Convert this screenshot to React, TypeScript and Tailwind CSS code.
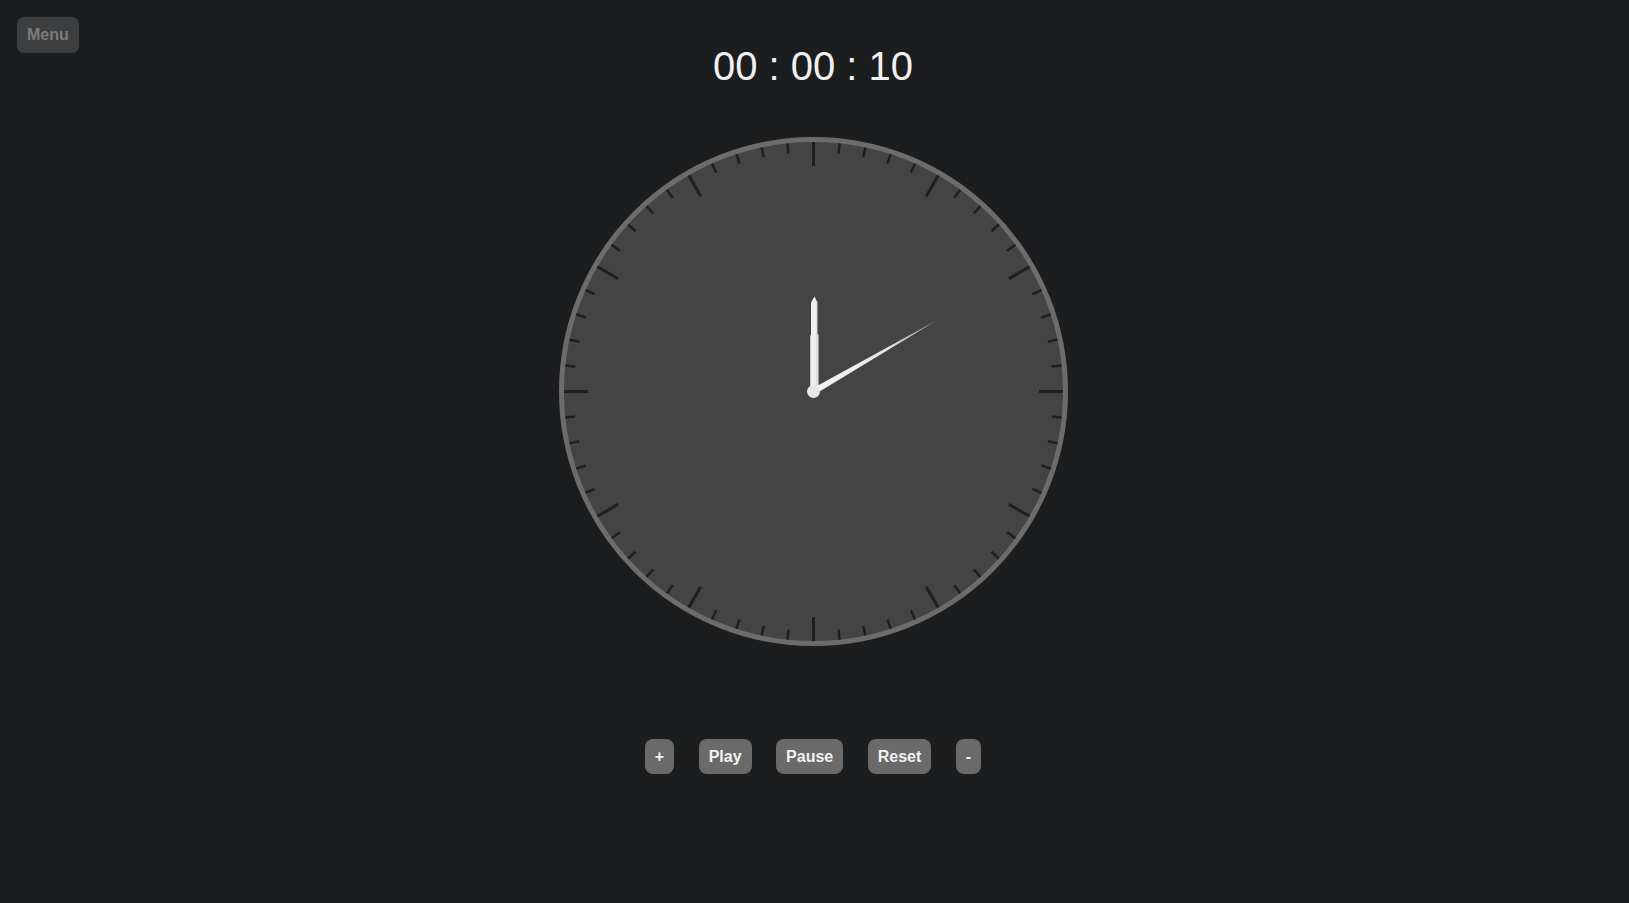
import React from "react";

const SIZE = 509;
const C = 254.5;

function ClockFace() {
  const ticks = Array.from({ length: 60 }, (_, i) => {
    const a = (i * 6 * Math.PI) / 180;
    const hour = i % 5 === 0;
    const r1 = 249.5;
    const r2 = hour ? 225.5 : 239.5;
    const sx = Math.sin(a);
    const cy = -Math.cos(a);
    return (
      <line
        key={i}
        x1={C + sx * r1}
        y1={C + cy * r1}
        x2={C + sx * r2}
        y2={C + cy * r2}
        stroke="#1f1f20"
        strokeWidth={hour ? 3 : 2.5}
      />
    );
  });

  const sa = (60 * Math.PI) / 180;
  const dx = Math.sin(sa);
  const dy = -Math.cos(sa);
  const px = Math.cos(sa);
  const py = Math.sin(sa);
  const len = 143;
  const tipX = C + dx * len;
  const tipY = C + dy * len;
  const hw = 3.2;
  const secPts = `${C + px * hw},${C + py * hw} ${C - px * hw},${C - py * hw} ${tipX},${tipY}`;

  return (
    <svg width={SIZE} height={SIZE} viewBox={`0 0 ${SIZE} ${SIZE}`} className="block">
      <defs>
        <linearGradient id="secg" gradientUnits="userSpaceOnUse" x1={C} y1={C} x2={tipX} y2={tipY}>
          <stop offset="0" stopColor="#f4f4f4" />
          <stop offset="0.6" stopColor="#e6e6e6" />
          <stop offset="1" stopColor="#a8a8a8" />
        </linearGradient>
        <linearGradient id="hg" x1="0" y1="0" x2="1" y2="0">
          <stop offset="0" stopColor="#bdbdbd" />
          <stop offset="0.35" stopColor="#ececec" />
          <stop offset="1" stopColor="#f2f2f2" />
        </linearGradient>
        <linearGradient id="mg" x1="0" y1="0" x2="1" y2="0">
          <stop offset="0" stopColor="#f0f0f0" />
          <stop offset="0.7" stopColor="#ededed" />
          <stop offset="1" stopColor="#d0d0d0" />
        </linearGradient>
      </defs>
      <circle cx={C} cy={C} r={252} fill="#444444" stroke="#6c6c6c" strokeWidth={5} />
      {ticks}
      {/* hour hand */}
      <polygon
        points={`${C - 3.5},${C} ${C - 3.5},${C - 56} ${C},${C - 59} ${C + 5},${C - 57} ${C + 5},${C}`}
        fill="url(#hg)"
      />
      {/* minute hand */}
      <polygon
        points={`${C - 2.5},${C} ${C - 2.5},${C - 89} ${C + 1},${C - 95} ${C + 4},${C - 89} ${C + 4},${C}`}
        fill="url(#mg)"
      />
      {/* second hand */}
      <polygon points={secPts} fill="url(#secg)" />
      <circle cx={C} cy={C} r={6.5} fill="#e8e8e8" />
    </svg>
  );
}

export default function App() {
  const font = { fontFamily: '"Liberation Sans", Arial, sans-serif' };
  const btn =
    "h-[35px] flex items-center px-[10px] rounded-[8px] bg-[#6a6a6a] text-[#f2f2f2] text-[16px] font-bold leading-none";
  return (
    <div
      className="min-h-[903px] w-full bg-[#1c1d1f] grid grid-cols-[1fr_auto_1fr] pr-[3px]"
      style={font}
    >
      <div className="pt-[17px] pl-[17px]">
        <button className="h-[36px] px-[10px] rounded-[7px] bg-[#3d3e40] text-[#7b7b7b] text-[16px] font-bold leading-none">
          Menu
        </button>
      </div>
      <div className="flex flex-col items-center pt-[46px]">
        <div className="text-[40px] leading-[40px] text-[#f0f0f0] whitespace-pre">00 : 00 : 10</div>
        <div className="mt-[51px]">
          <ClockFace />
        </div>
        <div className="mt-[93px] flex gap-[24.5px]">
          <button className={btn}>+</button>
          <button className={btn}>Play</button>
          <button className={btn}>Pause</button>
          <button className={btn}>Reset</button>
          <button className={btn}>-</button>
        </div>
      </div>
      <div />
    </div>
  );
}
